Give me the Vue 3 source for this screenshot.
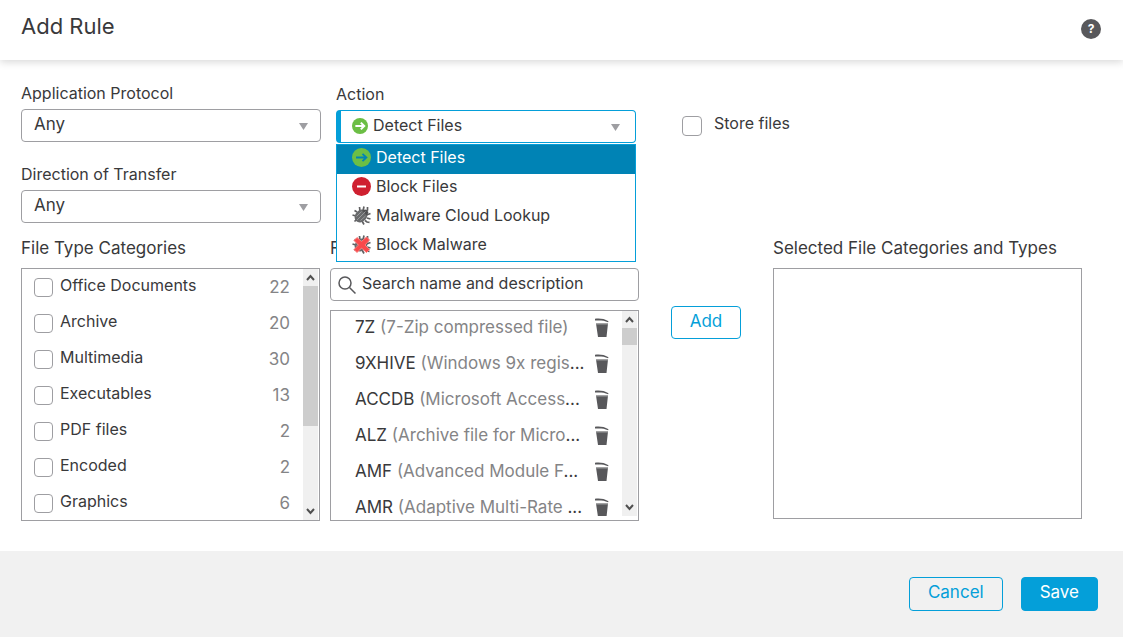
<script setup>
import { ref } from 'vue'

const actions = [
  { name: 'Detect Files', icon: 'detect' },
  { name: 'Block Files', icon: 'block' },
  { name: 'Malware Cloud Lookup', icon: 'bug' },
  { name: 'Block Malware', icon: 'bugblock' }
]
const action = ref('Detect Files')
const menuOpen = ref(true)

function pick(name) {
  action.value = name
  menuOpen.value = false
}

const categories = [
  { name: 'Office Documents', count: 22 },
  { name: 'Archive', count: 20 },
  { name: 'Multimedia', count: 30 },
  { name: 'Executables', count: 13 },
  { name: 'PDF files', count: 2 },
  { name: 'Encoded', count: 2 },
  { name: 'Graphics', count: 6 }
]

const fileTypes = [
  { name: '7Z', note: '(7-Zip compressed file)', more: '' },
  { name: '9XHIVE', note: '(Windows 9x regis', more: '...' },
  { name: 'ACCDB', note: '(Microsoft Access', more: '...' },
  { name: 'ALZ', note: '(Archive file for Micro', more: '...' },
  { name: 'AMF', note: '(Advanced Module F', more: '...' },
  { name: 'AMR', note: '(Adaptive Multi-Rate ', more: '...' }
]
</script>

<template>
  <form class="dialog" @submit.prevent>
    <header class="head">
      <h1>Add Rule</h1>
      <button class="help" type="button" aria-label="Help">?</button>
    </header>

    <main class="body">
      <section class="settings">
        <div class="stack">
          <div class="field">
            <label for="protocol">Application Protocol</label>
            <div class="pick">
              <select id="protocol"><option>Any</option></select>
              <svg class="caret" viewBox="0 0 9 7" aria-hidden="true"><path d="M0 0h9L4.500 7z" /></svg>
            </div>
          </div>
          <div class="field">
            <label for="direction">Direction of Transfer</label>
            <div class="pick">
              <select id="direction"><option>Any</option></select>
              <svg class="caret" viewBox="0 0 9 7" aria-hidden="true"><path d="M0 0h9L4.500 7z" /></svg>
            </div>
          </div>
        </div>

        <div class="field action">
          <span id="action-label">Action</span>
          <div class="pick">
            <button
              class="combo"
              type="button"
              aria-haspopup="listbox"
              aria-labelledby="action-label action-value"
              :aria-expanded="menuOpen"
              @click="menuOpen = !menuOpen"
            >
              <svg class="small-icon" viewBox="0 0 19 19" aria-hidden="true">
                <circle cx="9.5" cy="9.5" r="9.5" fill="#6cbe45" />
                <path d="M4 9.500h10M10.500 5.500l4 4-4 4" fill="none" stroke="#fff" stroke-width="2.400" />
              </svg>
              <span id="action-value">{{ action }}</span>
            </button>
            <svg class="caret" viewBox="0 0 9 7" aria-hidden="true"><path d="M0 0h9L4.500 7z" /></svg>
            <ul v-if="menuOpen" class="menu" role="listbox" aria-labelledby="action-label">
              <li
                v-for="item in actions"
                :key="item.name"
                role="option"
                :aria-selected="item.name === action"
                :class="{ chosen: item.name === action }"
                @click="pick(item.name)"
              >
                <svg class="item-icon" viewBox="0 0 19 19" aria-hidden="true">
                  <template v-if="item.icon === 'detect'">
                    <circle cx="9.5" cy="9.5" r="9.5" fill="#6cbe45" />
                    <path d="M4 9.500h10M10.500 5.800l3.900 3.700-3.900 3.700" fill="none" stroke="#0083b5" stroke-width="1.800" />
                  </template>
                  <template v-else-if="item.icon === 'block'">
                    <circle cx="9.5" cy="9.5" r="9.5" fill="#cf2030" />
                    <path d="M5 9.500h9" stroke="#fff" stroke-width="2" />
                  </template>
                  <template v-else>
                    <path
                      d="M8 5L7.500 1M11 5l1-4.500M13 6l2.500-2V1M14.500 9l4-1.500M15 12l3.500 1M13 14.500l2 1.500 2.500.3M10 15l2 3.500M5 13l-2.500 2.500M4 10L.5 9M5 6L2.500 4.500"
                      fill="none"
                      stroke="#606062"
                      stroke-width="1.700"
                    />
                    <ellipse cx="9" cy="10" rx="7" ry="5.800" transform="rotate(-45 9 10)" fill="#68696b" />
                    <path d="M10 4.500l5 5 1.500-3.500-3-2.500z" fill="#505052" />
                    <path d="M5 14L13.500 5.500M4.500 10.500L9.500 5.500M8.500 14.500l5-4.500" stroke="#98999b" stroke-width="1" />
                    <path
                      v-if="item.icon === 'bugblock'"
                      d="M5 2.500l4.500 4 5-4.500 3 3-4.500 5 4.500 4.500-3 3-5-4.500-4.500 4.500-3-3 4.500-4.500L2 5.500z"
                      fill="#f9494b"
                      stroke="#fb7d7c"
                      stroke-width="1"
                      stroke-linejoin="round"
                    />
                  </template>
                </svg>
                {{ item.name }}
              </li>
            </ul>
          </div>
        </div>

        <label class="store"><input class="box" type="checkbox" /><span>Store files</span></label>
      </section>

      <section class="pickers">
        <div class="column">
          <h2>File Type Categories</h2>
          <div class="panel">
            <ul class="rows">
              <li v-for="item in categories" :key="item.name" class="category">
                <label><input class="box" type="checkbox" /><span>{{ item.name }}</span></label>
                <span class="count">{{ item.count }}</span>
              </li>
            </ul>
            <div class="track" aria-hidden="true">
              <svg class="arrow" viewBox="0 0 15 17"><path d="M4 11l3.500-4L11 11" /></svg>
              <div class="thumb long"></div>
              <svg class="arrow end" viewBox="0 0 15 17"><path d="M4 6l3.500 4L11 6" /></svg>
            </div>
          </div>
        </div>

        <div class="column second">
          <h2>File Types</h2>
          <div class="search">
            <svg viewBox="0 0 20 20" aria-hidden="true">
              <circle cx="8" cy="8" r="6" /><path d="M12.500 12.500l6 6" />
            </svg>
            <input type="text" placeholder="Search name and description" aria-label="Search name and description" />
          </div>
          <div class="panel types">
            <ul class="rows">
              <li v-for="item in fileTypes" :key="item.name" class="type">
                <span class="type-name">{{ item.name }} <span class="note">{{ item.note }}</span>{{ item.more }}</span>
                <button class="trash" type="button" :aria-label="'Remove ' + item.name">
                  <svg viewBox="0 0 14 19" aria-hidden="true">
                    <path d="M0 .7C5 .2 9 .6 13.500 3.200l-.4 1C9 2.400 5 2.300 0 2.600zM1 5.500h12L11.500 19H3z" />
                    <path d="M1 6h12" stroke="#98999b" stroke-width="1" />
                  </svg>
                </button>
              </li>
            </ul>
            <div class="track" aria-hidden="true">
              <svg class="arrow" viewBox="0 0 15 17"><path d="M4 11l3.500-4L11 11" /></svg>
              <div class="thumb"></div>
              <svg class="arrow end" viewBox="0 0 15 17"><path d="M4 6l3.500 4L11 6" /></svg>
            </div>
          </div>
        </div>

        <button class="btn add" type="button">Add</button>

        <div class="column">
          <h2>Selected File Categories and Types</h2>
          <div class="panel empty"></div>
        </div>
      </section>
    </main>

    <footer class="foot">
      <button class="btn" type="button">Cancel</button>
      <button class="btn primary" type="submit">Save</button>
    </footer>
  </form>
</template>

<style>
body {
  margin: 0;
  background: #fff;
}
</style>

<style scoped>
.dialog {
  display: flex;
  flex-direction: column;
  min-height: 100vh;
  color: #39393b;
  font: 16px/20px Inter, "Liberation Sans", sans-serif;
}
.dialog *,
.dialog {
  box-sizing: border-box;
}
button,
input,
select {
  margin: 0;
  color: inherit;
  font: inherit;
}
h1,
h2,
ul {
  margin: 0;
  padding: 0;
  font-weight: 400;
  list-style: none;
}
h2,
select,
.btn,
.count,
.type-name {
  font-size: 17px;
}
.head {
  display: flex;
  align-items: center;
  justify-content: space-between;
  height: 60px;
  padding: 0 22px 2px 21px;
  box-shadow: 0 2px 8px rgba(0, 0, 0, 0.16);
}
h1 {
  padding-bottom: 6px;
  font-size: 22px;
  line-height: 28px;
}
.help {
  width: 20px;
  height: 20px;
  padding: 0;
  border: 0;
  border-radius: 50%;
  background: #58585b;
  color: #fff;
  font-size: 12px;
  font-weight: 700;
  line-height: 20px;
}
.body {
  flex: 1;
  padding: 23px 41px 30px 21px;
}
.settings {
  display: grid;
  grid-template-columns: 300fr 300fr 431fr;
  column-gap: 15px;
}
.stack {
  display: flex;
  flex-direction: column;
  gap: 22px;
}
.field {
  display: flex;
  flex-direction: column;
  gap: 6px;
}
.action {
  padding-top: 1px;
}
.pick {
  position: relative;
}
select,
.combo {
  display: flex;
  align-items: center;
  width: 100%;
  height: 33px;
  padding: 0 30px 3px 12px;
  border: 1px solid #9e9ea2;
  border-radius: 4px;
  background: #fff;
  appearance: none;
}
.combo {
  gap: 5px;
  border-color: #049fd9;
  border-left-width: 5px;
  padding-left: 11px;
}
.caret {
  position: absolute;
  top: 14px;
  right: 13px;
  width: 9px;
  height: 7px;
  fill: #9e9ea2;
  pointer-events: none;
}
.action .caret {
  right: 16px;
}
.small-icon {
  width: 16px;
  height: 16px;
  margin-top: 2px;
}
.menu {
  position: absolute;
  z-index: 2;
  top: 34px;
  left: 0;
  right: 0;
  border: 1px solid #049fd9;
  background: #fff;
}
.menu li {
  display: flex;
  align-items: center;
  gap: 5px;
  height: 29px;
  padding: 0 15px 5px;
}
.menu .chosen {
  background: #0083b5;
  color: #fff;
}
.item-icon {
  width: 19px;
  height: 19px;
}
.store {
  display: flex;
  align-items: flex-start;
  gap: 12px;
  padding: 30px 0 0 31px;
}
.box {
  flex: none;
  width: 20px;
  height: 20px;
  margin-top: 3px;
  border: 1px solid #9e9ea2;
  border-radius: 4px;
  background: #fff;
  appearance: none;
}
.pickers {
  display: grid;
  grid-template-columns: 299fr 319fr 134fr 309fr;
  margin-top: 15px;
}
.column {
  display: flex;
  flex-direction: column;
}
.second {
  margin-left: 10px;
}
h2 {
  margin-bottom: 10px;
  line-height: 20px;
}
.panel {
  display: flex;
  height: 253px;
  border: 1px solid #9e9ea2;
}
.rows {
  flex: 1;
  min-width: 0;
  overflow: hidden;
}
.category {
  display: flex;
  align-items: center;
  justify-content: space-between;
  height: 36px;
  padding: 0 13px 0 12px;
}
.category label {
  display: flex;
  align-items: flex-start;
  gap: 7px;
  padding-bottom: 3px;
}
.category .box {
  width: 19px;
  height: 19px;
}
.count,
.note {
  color: #848486;
}
.track {
  display: flex;
  flex-direction: column;
  flex: none;
  width: 15px;
  margin-right: 1px;
  background: #f0f0f0;
}
.arrow {
  width: 15px;
  height: 17px;
  fill: none;
  stroke: #505050;
  stroke-width: 2;
}
.end {
  margin-top: auto;
}
.thumb {
  height: 17px;
  background: #cdcdcd;
}
.long {
  height: 140px;
}
.search {
  display: flex;
  align-items: center;
  gap: 5px;
  height: 33px;
  margin-bottom: 9px;
  padding: 0 6px;
  border: 1px solid #9e9ea2;
  border-radius: 4px;
}
.search svg {
  flex: none;
  width: 20px;
  height: 20px;
  fill: none;
  stroke: #58585b;
  stroke-width: 1.500;
}
.search input {
  flex: 1;
  min-width: 0;
  padding: 0 0 3px;
  border: 0;
  outline: 0;
  background: none;
}
.search input::placeholder {
  color: #39393b;
  opacity: 1;
}
.types {
  height: 211px;
  padding-bottom: 4px;
}
.type {
  display: flex;
  align-items: center;
  justify-content: space-between;
  height: 36px;
  padding: 0 13px 4px 24px;
}
.type-name {
  line-height: 18px;
  white-space: pre;
}
.trash {
  flex: none;
  width: 14px;
  height: 19px;
  padding: 0;
  border: 0;
  background: none;
}
.trash svg {
  display: block;
  width: 14px;
  height: 19px;
  fill: #58585b;
}
.btn {
  height: 34px;
  padding: 0 18px 4px;
  border: 1px solid #049fd9;
  border-radius: 4px;
  background: transparent;
  color: #049fd9;
}
.add {
  justify-self: center;
  height: 33px;
  margin-top: 68px;
}
.empty {
  height: 251px;
}
.foot {
  display: flex;
  align-items: flex-start;
  justify-content: flex-end;
  gap: 18px;
  padding: 26px 25px;
  background: #f1f1f1;
}
.primary {
  background: #049fd9;
  color: #fff;
}
</style>
